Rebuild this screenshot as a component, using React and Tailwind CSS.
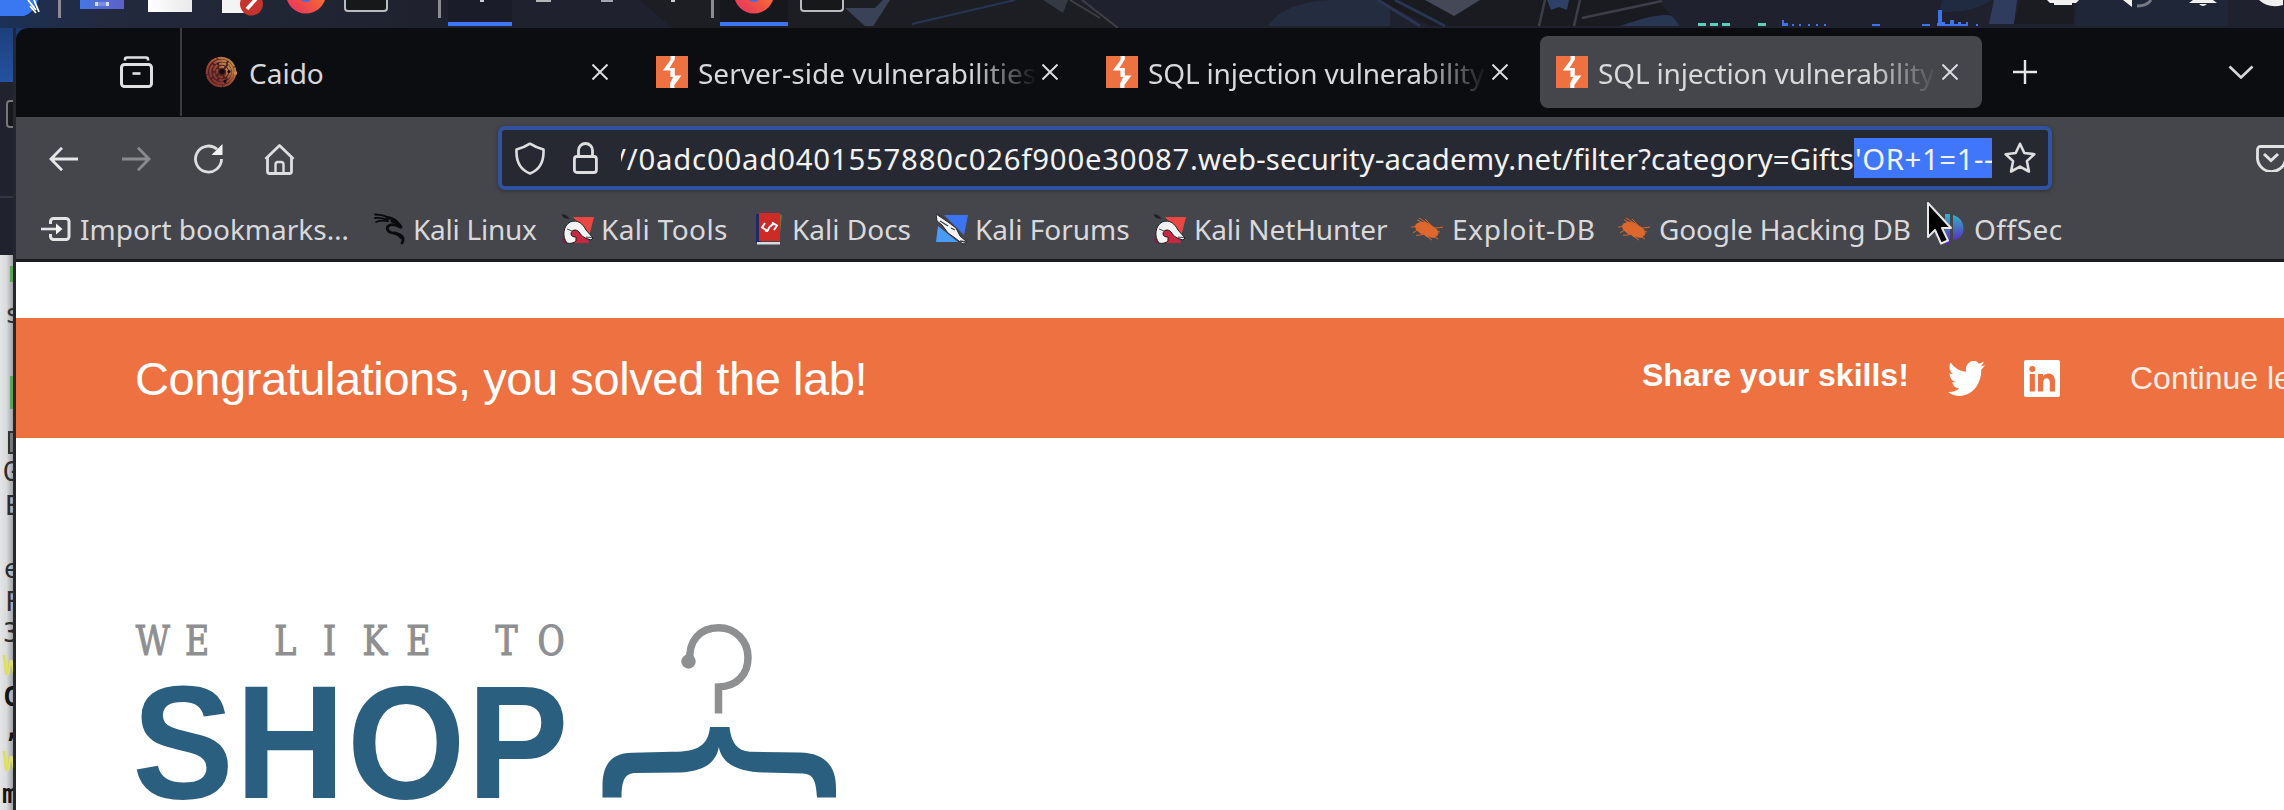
import React from "react";

const BurpIcon = () => (
  <svg className="size-8 shrink-0" viewBox="0 0 32 32">
    <rect width="32" height="32" fill="#ee7142" />
    <path d="M14.6 0h4.2v3.600L13.500 12h5.300v7.400h6.600L18.400 29v3h-4.200v-5l3-6h-2.800v-6.400H6.700L14.600 4z" fill="#fff" />
  </svg>
);

const Close = () => (
  <svg className="size-4 shrink-0" viewBox="0 0 16 16">
    <path d="M.5.5l15 15M15.500.5l-15 15" stroke="#dcdcdd" strokeWidth="2" />
  </svg>
);

const CaidoIcon = () => (
  <svg className="size-8 shrink-0" viewBox="0 0 32 32" fill="none">
    <defs>
      <linearGradient id="caido" x1="0" y1="1" x2="1" y2="0">
        <stop offset="0" stopColor="#7c2a2c" />
        <stop offset=".5" stopColor="#9c4a35" />
        <stop offset="1" stopColor="#cf9a4e" />
      </linearGradient>
    </defs>
    <circle cx="16" cy="16" r="15" fill="#4a2120" />
    <g stroke="url(#caido)" strokeWidth="2.200">
      <circle cx="16" cy="16" r="14.200" strokeDasharray="20 1" />
      <circle cx="16.500" cy="16" r="11.300" strokeDasharray="13 2" />
      <circle cx="17" cy="16" r="8.300" strokeDasharray="7 2" />
      <circle cx="17" cy="16" r="5.200" strokeDasharray="5 2" />
    </g>
    <circle cx="17" cy="15.500" r="2.600" fill="#160d10" />
    <circle cx="24" cy="15.500" r="1.600" fill="#160d10" />
    <circle cx="20" cy="25" r="1.600" fill="#160d10" />
    <circle cx="30.500" cy="17" r="1.800" fill="#c78d4a" />
  </svg>
);

const KaliDragon = () => (
  <svg className="h-8 w-8 shrink-0" viewBox="0 0 32 32" fill="none" stroke="#0b0b0d" strokeLinecap="round">
    <path d="M1 1.500c6 .2 11 1 14 4M1 5c4-.4 9 .4 13 2M2 9c4-1.600 8-1.500 12-1" strokeWidth="1.800" />
    <path d="M13 4.500c6 0 10 3.500 14 10-4-2.500-8-3.500-11-2.500-4 1.500-3.500 6 1 7.500 5 1.500 9 1 11.500 4.500 1.500 2.500.5 4-.5 6" strokeWidth="2.800" />
    <path d="M21 20c3 1 5 3 7 5M18 8c4 1 7 3 9 6" strokeWidth="3" />
  </svg>
);

const KaliRed = () => (
  <svg className="size-8 shrink-0" viewBox="0 0 32 32">
    <path d="M11 4h21l-5 20-9-12z" fill="#ea4642" />
    <path d="M8 20l8-5 8 4 3 11H1z" fill="#c8283f" />
    <path d="M0 24l5 6-4 0z" fill="#8c1745" />
    <path d="M0 1.500l4 1 3 3-5-1z" fill="#222" stroke="#222" />
    <path d="M5 30C0 24 1 13 8 9c8-3 13 2 16 8l7 8-2 2c-6-2-9-3-12-8-3-3.500-8-2-8 2 0 2 2 3 5 3v4c-2 2-6 3-9 2z" fill="#f3f3f3" stroke="#1d1d20" strokeWidth="1" />
    <path d="M5 16l5 2M24 24l6 .7" stroke="#4a4a4c" fill="none" />
  </svg>
);

const KaliBook = () => (
  <svg className="h-8 w-[26px] shrink-0" viewBox="0 0 26 32">
    <path d="M0 1h5v28l-5 1z" fill="#1c2a6b" />
    <path d="M23 1l3 1-1 10-2 16z" fill="#7d6a3a" />
    <rect x="3" y="0" width="21" height="28" fill="#cc2b28" />
    <path d="M1 29h23v2.500H1z" fill="#d9dadd" />
    <path d="M9 10l-3 4.500 5 3M18 17l3-4.500-5-3M9 17.500c4 2 3-3 5-4s3-4 5-1.500" fill="none" stroke="#fff" strokeWidth="1.900" />
  </svg>
);

const KaliBlue = () => (
  <svg className="size-8 shrink-0" viewBox="0 0 32 32">
    <path d="M8 2h24l-4 20z" fill="#3b73f0" />
    <path d="M2 13L0 29h22z" fill="#4a9bf5" />
    <path d="M0 1l12 8 8 6 4 8 7 6-4 2-8-6-7-5-6-8-5-4z" fill="#f2f2f2" stroke="#26282e" strokeWidth="1" />
    <path d="M3 1l8 7M4 8l8 5M15 15l4 2M24 28l6 1" stroke="#3c3e44" strokeWidth="1.300" fill="none" />
  </svg>
);

const Bug = () => (
  <svg className="h-6 w-8 shrink-0" viewBox="0 0 32 26" preserveAspectRatio="none" fill="none" stroke="#dd672c">
    <path d="M5 8c4-3 9-3 13 0 5 3 9 5 9 10-1 2-2 4-4 4-4 0-8-1-10-3C8 17 3 13 5 8z" fill="#dd672c" />
    <path d="M6 10L0 11M7 14l-5 3M12 19l-7 1M14 20l7 5M24 12l8-1M18 8L8 1M13 7L6 3M20 9l-6-7M23 21l4 3M24 16l5 0" strokeWidth="1" />
  </svg>
);

const OffSec = () => (
  <svg className="size-8 shrink-0" viewBox="0 0 32 32">
    <defs>
      <linearGradient id="os" x1="0" y1="0" x2="0" y2="1">
        <stop offset="0" stopColor="#35b3c6" />
        <stop offset="1" stopColor="#5b1fc4" />
      </linearGradient>
    </defs>
    <path d="M19 2c7 2 10.500 7 10.500 13.500S25 27 19 27zM11 1h5v30h-5zM1 10h7v14H1z" fill="url(#os)" />
  </svg>
);

const Import = () => (
  <svg className="h-8 w-[30px] shrink-0" viewBox="0 0 30 32" fill="none" stroke="#e4e4e5" strokeWidth="3">
    <path d="M9.500 11V8.500a3 3 0 0 1 3-3h12.500a3 3 0 0 1 3 3v15a3 3 0 0 1-3 3H12.500a3 3 0 0 1-3-3V21" />
    <path d="M0 16h16" strokeWidth="2.600" />
    <path d="M15 10.500l6.500 5.500-6.500 5.500z" fill="#f4f4f4" stroke="none" />
  </svg>
);

const Firefox = () => (
  <svg className="h-[27px] w-10 shrink-0" viewBox="0 -13 40 27">
    <defs>
      <linearGradient id="ff" x1="0" y1="1" x2="1" y2="0">
        <stop offset="0" stopColor="#e2306b" />
        <stop offset=".45" stopColor="#f2543f" />
        <stop offset="1" stopColor="#fb9a3c" />
      </linearGradient>
    </defs>
    <circle cx="20" cy="-20" r="20" fill="url(#ff)" />
    <circle cx="20" cy="-20" r="9" fill="#4c6bd8" />
  </svg>
);

const FirefoxDock = () => (
  <svg className="h-[14px] w-10 shrink-0" viewBox="0 0 40 14">
    <circle cx="20" cy="-6.500" r="20" fill="url(#ff)" />
    <circle cx="20" cy="-6" r="8" fill="#4c6bd8" />
  </svg>
);

const Terminal = () => <div className="h-[12px] w-11 rounded-b border-2 border-t-0 border-[#b9bbbf] bg-[#17181a]" />;

const Sep = () => <div className="h-[18px] w-[3px] bg-[#8b8d92]" />;

function Panel() {
  return (
    <header className="relative h-[28px] w-full shrink-0 overflow-hidden bg-[#1f222e]">
      <svg className="absolute inset-0 h-[28px] w-full" viewBox="0 0 2284 28">
        <defs>
          <linearGradient id="pl" x1="0" x2="1">
            <stop offset="0" stopColor="#1c3157" />
            <stop offset=".15" stopColor="#232a3e" />
            <stop offset=".6" stopColor="#1f222e" />
          </linearGradient>
        </defs>
        <rect width="700" height="28" fill="url(#pl)" />
        <path d="M640 0h240l-5 28H672z" fill="#1c1e24" />
        <path d="M845 8h30l8-8h14l-10 26h-22z" fill="#3a4257" />
        <path d="M890 0h185l45 28H872z" fill="#1c1e24" />
        <path d="M912 24L1015 0" stroke="#253552" strokeWidth="2" />
        <path d="M1043 0h25l-5 13z" fill="#343944" />
        <path d="M1070 0l30 18M1082 0l36 28" stroke="#3d3f47" strokeWidth="2" />
        <path d="M1268 26q16-24 62-26h60v26z" fill="#242c3f" />
        <path d="M1378 0h60l220 0 22 26H1430z" fill="#1a1b20" />
        <path d="M1425 0h55l-26 16z" fill="#444857" />
        <path d="M1378 0l42 26M1395 0l50 26" stroke="#293552" strokeWidth="3" />
        <path d="M1547 0h22l-2 10-8-3-8 3z" fill="#2f4068" />
        <path d="M1582 18l80-17M1545 0l-6 26M1580 0l-6 26" stroke="#3c3f48" strokeWidth="2.500" />
        <path d="M1620 26q40-14 52-10l8 10z" fill="#293652" />
        <path d="M1940 12q30 2 52-12h-50z" fill="#202b42" />
        <path d="M1994 0h23l-3 24h-25z" fill="#303c5d" />
        <path d="M2020 0h54v24h-60z" fill="#1b1c21" />
        <path d="M2078 0h150v26H2074z" fill="#1f2638" />
        <path d="M1698 23h8v3h-8zM1710 23h8v3h-8zM1722 23h8v3h-8zM1758 23h8v3h-8z" fill="#5bd0bb" />
        <path d="M1782 20h2v3h4v3h-6zM1792 24h2v2h-2zM1799 24h2v2h-2zM1808 24h2v2h-2zM1816 24h2v2h-2zM1824 24h2v2h-2zM1872 24h8v2h-8zM1922 24h8v2h-8zM1937 26v-3h1V10h4v12h3v2h5v-4h4v4h4v-2h3v2h5v-2h2v4zM1976 24h2v2h-2z" fill="#3f73ee" />
      </svg>
      <div className="relative flex h-full items-start">
        <svg className="h-[22px] w-[58px] shrink-0" viewBox="0 0 58 22">
          <path d="M0 0h38q-3 12-14 16H0z" fill="#3a78f2" />
          <path d="M28 0l8 10M34 0l5 12M30 6l6 7" stroke="#fff" strokeWidth="1.800" />
        </svg>
        <Sep />
        <div className="ml-[19px] flex h-[9px] w-11 justify-center bg-linear-to-r from-[#4377e4] to-[#5d60c4] pt-[2px]">
          <div className="h-1 w-[14px] border-x-[3px] border-[#d5daf3] bg-[#7f8edb]" />
        </div>
        <div className="ml-6 h-[12px] w-11 bg-linear-to-r from-white to-[#e9e9ea]" />
        <svg className="ml-[30px] h-4 w-[42px] shrink-0" viewBox="0 0 42 16">
          <rect width="30" height="13" fill="#f4f4f4" />
          <circle cx="29.500" cy="4" r="11.500" fill="#c5342d" />
          <path d="M25 9l9-10" stroke="#fff" strokeWidth="3.500" />
        </svg>
        <div className="ml-[22px] flex h-[14px] items-start overflow-hidden"><FirefoxDock /></div>
        <div className="ml-[18px]"><Terminal /></div>
        <div className="ml-[50px]"><Sep /></div>
        <div className="ml-[7px] flex h-[26px] w-16 items-start justify-center border-b-4 border-[#3f74f3] bg-[#1a1d29]">
          <div className="ml-1 h-[2px] w-1 bg-[#c8cdd6]" />
        </div>
        <div className="ml-6 h-[2px] w-[15px] bg-[#b4b6ba]" />
        <div className="ml-[50px] h-[2px] w-[12px] bg-[#9fa7b4]" />
        <div className="ml-[58px] h-[2px] w-1 bg-[#c8cdd6]" />
        <div className="ml-[36px]"><Sep /></div>
        <div className="ml-[6px] flex h-[26px] w-[68px] items-start justify-center border-b-4 border-[#3f74f3] bg-[#17181e]"><FirefoxDock /></div>
        <div className="ml-[12px]"><Terminal /></div>
        <svg className="ml-[1203px] h-[8px] w-[236px]" viewBox="0 0 236 8">
          <path d="M0 0h32l-3 3h-4v2H7V3H3z" fill="#f0f0f0" />
          <path d="M76 0h9v7z" fill="#f0f0f0" />
          <path d="M90 6q10 0 14-6" stroke="#777a83" strokeWidth="3" fill="none" />
          <path d="M146 0h20l4 3h-28zM152 4h8q-4 4-8 0z" fill="#f0f0f0" />
          <path d="M212 0h24v5q-14 4-24-5z" fill="#f0f0f0" />
        </svg>
        <svg className="size-0"><defs><linearGradient id="ff" x1="0" y1="1" x2="1" y2="0"><stop offset="0" stopColor="#e2306b" /><stop offset=".45" stopColor="#f2543f" /><stop offset="1" stopColor="#fb9a3c" /></linearGradient></defs></svg>
      </div>
    </header>
  );
}

const bgChars = [
  ["top-[43px] left-[5px] text-[#333]", "s"],
  ["top-[201px] left-[3px] text-[#2c2c2e]", "G"],
  ["top-[235px] left-[5px] text-[#2c2c2e]", "E"],
  ["top-[298px] left-[4px] text-[#2c2c2e]", "e"],
  ["top-[331px] left-[5px] text-[#2c2c2e]", "F"],
  ["top-[362px] left-[3px] text-[#2c2c2e]", "3"],
  ["top-[395px] left-[3px] font-bold text-[#dfe060]", "W"],
  ["top-[426px] left-[3px] font-bold text-[#151515]", "C"],
  ["top-[457px] left-[4px] font-bold text-[#151515]", ","],
  ["top-[491px] left-[3px] font-bold text-[#dfe060]", "W"],
  ["top-[523px] left-[2px] font-bold text-[#151515]", "m"],
];

function BackWindow() {
  return (
    <aside className="flex w-4 shrink-0 flex-col overflow-hidden border-r-[3px] border-[#25272f] bg-[#20222e]">
      <div className="h-[54px] w-full shrink-0 bg-linear-to-b from-[#1d3f7c] to-[#2452a0]" />
      <div className="h-[116px] w-full shrink-0 border-b-2 border-[#343743] pt-[18px] pl-[6px]">
        <div className="h-7 w-6 rounded border-2 border-[#77787c] bg-[#17181c]" />
      </div>
      <div className="h-[57px] shrink-0" />
      <div className="relative flex-1 overflow-hidden bg-linear-to-r from-[#e4e5e7] via-[#d9dadc] to-[#a2a3a6]">
        <div className="absolute top-[11px] left-[10px] h-4 w-4 bg-[#5ea356]" />
        <div className="absolute top-[121px] left-[10px] h-[33px] w-4 bg-[#5ea356]" />
        <div className="absolute top-[176px] left-[8px] h-[23px] w-4 border-2 border-[#333] bg-[#77787a]" />
        {bgChars.map(([c, t], i) => (
          <span key={i} className={"absolute font-['DejaVu_Sans_Mono',monospace] text-[26px] leading-8 " + c}>{t}</span>
        ))}
      </div>
    </aside>
  );
}

const fade = "overflow-hidden whitespace-nowrap [mask-image:linear-gradient(to_right,#000_calc(100%-64px),transparent)]";

function Tab({ icon, title, className, titleClass }) {
  return (
    <div className={"flex h-[72px] shrink-0 items-center rounded-lg pl-4 " + className}>
      {icon}
      <span className={"relative top-px ml-[10px] text-[28px] leading-10 " + titleClass}>{title}</span>
      <Close />
    </div>
  );
}

function TabBar() {
  return (
    <div className="flex h-[89px] shrink-0 items-start rounded-tl-xl bg-[#0c0d11]">
      <div className="flex h-[88px] w-[166px] items-center border-r-2 border-[#3a3b40] pl-[104px]">
        <svg className="h-8 w-[33px]" viewBox="0 0 33 32" fill="none" stroke="#e0e0e2" strokeWidth="3">
          <path d="M5 4.500V3.500a2 2 0 0 1 2-2h19a2 2 0 0 1 2 2v1" strokeWidth="2.600" />
          <rect x="1.500" y="8.500" width="30" height="22" rx="3" />
          <path d="M12.500 17.500h8" strokeWidth="2.600" />
        </svg>
      </div>
      <div className="flex items-center pt-2">
        <Tab icon={<CaidoIcon />} title="Caido" className="ml-[7px] w-[443px]" titleClass="mr-[270px] w-[75px] pl-[2px] text-[#d8d8da]" />
        <Tab icon={<BurpIcon />} title="Server-side vulnerabilities" className="ml-[8px] w-[442px]" titleClass={fade + " mr-[5px] w-[339px] text-[#d8d8da]"} />
        <Tab icon={<BurpIcon />} title="SQL injection vulnerability" className="ml-[8px] w-[442px]" titleClass={fade + " mr-[5px] w-[339px] -tracking-[0.180px] text-[#d8d8da]"} />
        <Tab icon={<BurpIcon />} title="SQL injection vulnerability" className="ml-[8px] w-[442px] bg-[#45464b]" titleClass={fade + " mr-[5px] w-[339px] -tracking-[0.180px] text-[#d8d8da]"} />
        <svg className="ml-[31px] size-6" viewBox="0 0 24 24"><path d="M12 0v24M0 12h24" stroke="#e6e6e7" strokeWidth="2.400" /></svg>
        <svg className="ml-[191px] h-[14px] w-[26px]" viewBox="0 0 26 14" fill="none"><path d="M1.500 1.500L13 12.500l11.500-11" stroke="#d8d8da" strokeWidth="2.600" /></svg>
      </div>
    </div>
  );
}

function NavBar() {
  return (
    <div className="flex h-[82px] shrink-0 items-center">
      <div className="flex shrink-0 items-center pt-[2px]">
        <svg className="ml-[33px] h-6 w-[29px]" viewBox="0 0 29 24" fill="none" stroke="#e6e6e7" strokeWidth="2.800"><path d="M29 12H2M13 .8L2 12l11 11.200" /></svg>
        <svg className="ml-[44px] h-6 w-[29px]" viewBox="0 0 29 24" fill="none" stroke="#8a8b8e" strokeWidth="2.800"><path d="M0 12h27M16 .8L27 12 16 23.200" /></svg>
        <svg className="ml-[43px] h-[30px] w-[30px]" viewBox="0 0 30 30" fill="none" stroke="#dededf" strokeWidth="2.800">
          <path d="M27.500 15A13 13 0 1 1 23 5.200" /><path d="M28.500 0v11h-11z" fill="#f2f2f2" stroke="none" />
        </svg>
        <svg className="ml-[40px] h-8 w-[31px]" viewBox="0 0 31 32" fill="none" stroke="#dededf" strokeWidth="2.800" strokeLinejoin="round">
          <path d="M1.500 16L15.500 2.500l14 13.500M3.500 14.500V28.500a2 2 0 0 0 2 2h20a2 2 0 0 0 2-2v-14" />
          <path d="M11.500 30V21.500a2.500 2.500 0 0 1 2.500-2.500h3a2.500 2.500 0 0 1 2.500 2.500V30" strokeWidth="2.400" />
        </svg>
      </div>
      <div className="ml-[203px] flex h-16 w-[1554px] shrink-0 items-center rounded-[7px] border-4 border-[#31539f] bg-[#272932] shadow-[0_1px_4px_rgba(0,0,0,.35)]">
        <svg className="ml-[13px] h-[33px] w-[30px]" viewBox="0 0 30 33" fill="none" stroke="#dededf" strokeWidth="2.600" strokeLinejoin="round">
          <path d="M15 1.700C10 5 6 6.300 1.500 7.500c-.5 11 3 20 13.500 24 10.500-4 14-13 13.500-24C24 6.300 20 5 15 1.700z" />
        </svg>
        <svg className="ml-[28px] h-8 w-[25px]" viewBox="0 0 25 32" fill="none" stroke="#dededf" strokeWidth="2.800">
          <rect x="1.400" y="14.500" width="22" height="16" rx="2.500" /><path d="M5.500 14.500V8.500a7 7 0 0 1 14 0v6" />
        </svg>
        <div className="ml-[23px] flex w-[1371px] items-center justify-end overflow-hidden text-[29.33px] leading-[42px] whitespace-nowrap text-[#f2f2f3]">
          <span className="pt-[2px]">
            <span className="tracking-[0.790px]">//0adc00ad0401557880c026f900e30087</span>
            <span className="tracking-[0.140px]">.web-security-academy.net/filter?category=Gifts</span>
          </span>
          <span className="h-10 w-[138px] shrink-0 bg-[#4077fa] pl-px tracking-[0.600px]">'OR+1=1--</span>
        </div>
        <svg className="ml-[12px] size-8" viewBox="0 0 32 32" fill="none" stroke="#dededf" strokeWidth="2.600" strokeLinejoin="round">
          <path d="M16 1.800l4.300 9.200 10 1.200-7.400 6.900 2 10.400L16 24.600l-8.900 4.900 2-10.400-7.400-6.900 10-1.200z" />
        </svg>
      </div>
      <svg className="ml-[204px] h-[27px] w-7 shrink-0" viewBox="0 0 28 27" fill="none" stroke="#e2e2e3" strokeWidth="2.800">
        <path d="M30 1.500H4.500a3 3 0 0 0-3 3V11a14 14 0 0 0 28 3" /><path d="M8 9l7 6.500L22 9" strokeWidth="3" />
      </svg>
    </div>
  );
}

const bookmarks = [
  [Import, "Import bookmarks…", "ml-[25px] w-[325px]", "ml-[9px]"],
  [KaliDragon, "Kali Linux", "ml-[8px] w-[184px]", "ml-[7px] -tracking-[0.250px]"],
  [KaliRed, "Kali Tools", "ml-[4px] w-[187px]", "ml-[7px] tracking-[0.400px]"],
  [KaliBook, "Kali Docs", "ml-[7px] w-[180px]", "ml-[10px]"],
  [KaliBlue, "Kali Forums", "w-[218px]", "ml-[7px]"],
  [KaliRed, "Kali NetHunter", "w-[257px]", "ml-[8px] -tracking-[0.100px]"],
  [Bug, "Exploit-DB", "w-[207px]", "ml-[9px] tracking-[0.700px]"],
  [Bug, "Google Hacking DB", "w-[316px]", "ml-[9px] -tracking-[0.150px]"],
  [OffSec, "OffSec", "w-[150px]", "ml-[8px] tracking-[0.500px]"],
];

function Bookmarks() {
  return (
    <div className="flex h-[60px] shrink-0 items-center">
      {bookmarks.map(([Icon, label, box, text]) => (
        <div key={label} className={"flex shrink-0 items-center text-[28px] leading-[60px] whitespace-nowrap text-[#d9d9db] " + box}>
          <Icon />
          <span className={text}>{label}</span>
        </div>
      ))}
    </div>
  );
}

function Banner() {
  return (
    <div className="mt-14 flex h-[120px] shrink-0 items-center overflow-hidden bg-[#ee7142] whitespace-nowrap text-white">
      <span className="ml-[118px] w-[1508px] shrink-0 pl-px text-[47px] leading-none -tracking-[0.420px]">Congratulations, you solved the lab!</span>
      <span className="relative -top-[3px] w-[306px] shrink-0 text-[32px] leading-9 font-bold">Share your skills!</span>
      <svg className="relative h-[35px] w-[37px] shrink-0" viewBox="0 2.300 24 19.500" preserveAspectRatio="none" fill="#fff">
        <path d="M23.950 4.570a10 10 0 0 1-2.820.77 4.960 4.960 0 0 0 2.160-2.720 9.900 9.900 0 0 1-3.120 1.180 4.920 4.920 0 0 0-8.380 4.480A13.930 13.930 0 0 1 1.640 3.160a4.920 4.920 0 0 0 1.520 6.570 4.900 4.900 0 0 1-2.230-.61v.06a4.920 4.920 0 0 0 3.950 4.830 5 5 0 0 1-2.210.08 4.930 4.930 0 0 0 4.600 3.420A9.870 9.870 0 0 1 0 19.540a13.940 13.940 0 0 0 7.550 2.210c9.050 0 14-7.500 14-13.980 0-.21 0-.42-.02-.63a9.940 9.940 0 0 0 2.460-2.550z" />
      </svg>
      <svg className="relative ml-[39px] h-[37px] w-9 shrink-0" viewBox="0 0 36 37">
        <rect width="36" height="37" rx="2" fill="#fff" />
        <circle cx="8.300" cy="9" r="3" fill="#ee7142" />
        <path d="M5.700 14h5.200v17.500H5.700zM14 14h5v2.500c2.500-4.500 12-4.500 12 4.500v10.500h-5.200V22.500c0-6-6.600-5.500-6.600 0v9H14z" fill="#ee7142" />
      </svg>
      <span className="relative ml-[70px] text-[32px] text-[#fdeee7]">Continue learning »</span>
    </div>
  );
}

function Logo() {
  return (
    <svg className="mt-[178px] ml-[116px] h-[194px] w-[720px] shrink-0" viewBox="132 616 720 194">
      <g transform="scale(.8 1)">
        <text y="655" fontFamily="'DejaVu Serif', serif" fontSize="41.500" fill="#8e8f90" stroke="#8e8f90" strokeWidth="1.200" textAnchor="middle"
          x="191 246.500 302 356.500 412 468.500 523 578 633.200 688.800">WE LIKE TO</text>
      </g>
      <g transform="translate(132.200 797.700) scale(.94 1)">
        <text fontFamily="'Liberation Sans', sans-serif" fontWeight="700" fontSize="162" letterSpacing="1.700" fill="#2b5f80">SHOP</text>
      </g>
      <circle cx="688.500" cy="661.500" r="7.200" fill="#8e8f90" />
      <path d="M690 661C688 641 700 627.700 718.500 627.700c17 0 29.500 13 29.500 29.800 0 16-10 28.800-29.500 29.500V713.500" fill="none" stroke="#8e8f90" strokeWidth="7.500" />
      <path d="M602.500 797.500V786C602.500 765 611 753 632 752.700L672 751.700C697 752 708 746 710 727H729.500C731 742 737 751 750 751.700L800 752.500C825 753 836 766 836 788V797.500H817C816 780 813 774 803 773.500L765 772.500C740 772 722 765 718.800 747C716 765 700 771.500 680 772.500L634 773C624 774 621.500 782 621.500 797.500Z" fill="#2b5f80" />
    </svg>
  );
}

export default function App() {
  return (
    <div className="relative flex h-[810px] w-[2284px] flex-col overflow-hidden bg-[#1d3a70] font-['Noto_Sans',sans-serif]">
      <Panel />
      <div className="flex min-h-0 flex-1">
        <BackWindow />
        <main className="flex min-w-0 flex-1 flex-col overflow-hidden">
          <TabBar />
          <div className="flex shrink-0 flex-col border-b-[3px] border-[#1b1c20] bg-[#45464b]">
            <NavBar />
            <Bookmarks />
          </div>
          <div className="flex min-h-0 flex-1 flex-col overflow-hidden bg-white font-['Liberation_Sans',sans-serif]">
            <Banner />
            <Logo />
          </div>
        </main>
      </div>
      <svg className="absolute top-[200px] left-[1926px] h-[48px] w-[30px]" viewBox="0 0 30 48">
        <path d="M2 3v34l7-7 6 13.500 7-3-6-12.500h9z" fill="#000" stroke="#e6e6e8" strokeWidth="2" strokeLinejoin="round" />
      </svg>
    </div>
  );
}
